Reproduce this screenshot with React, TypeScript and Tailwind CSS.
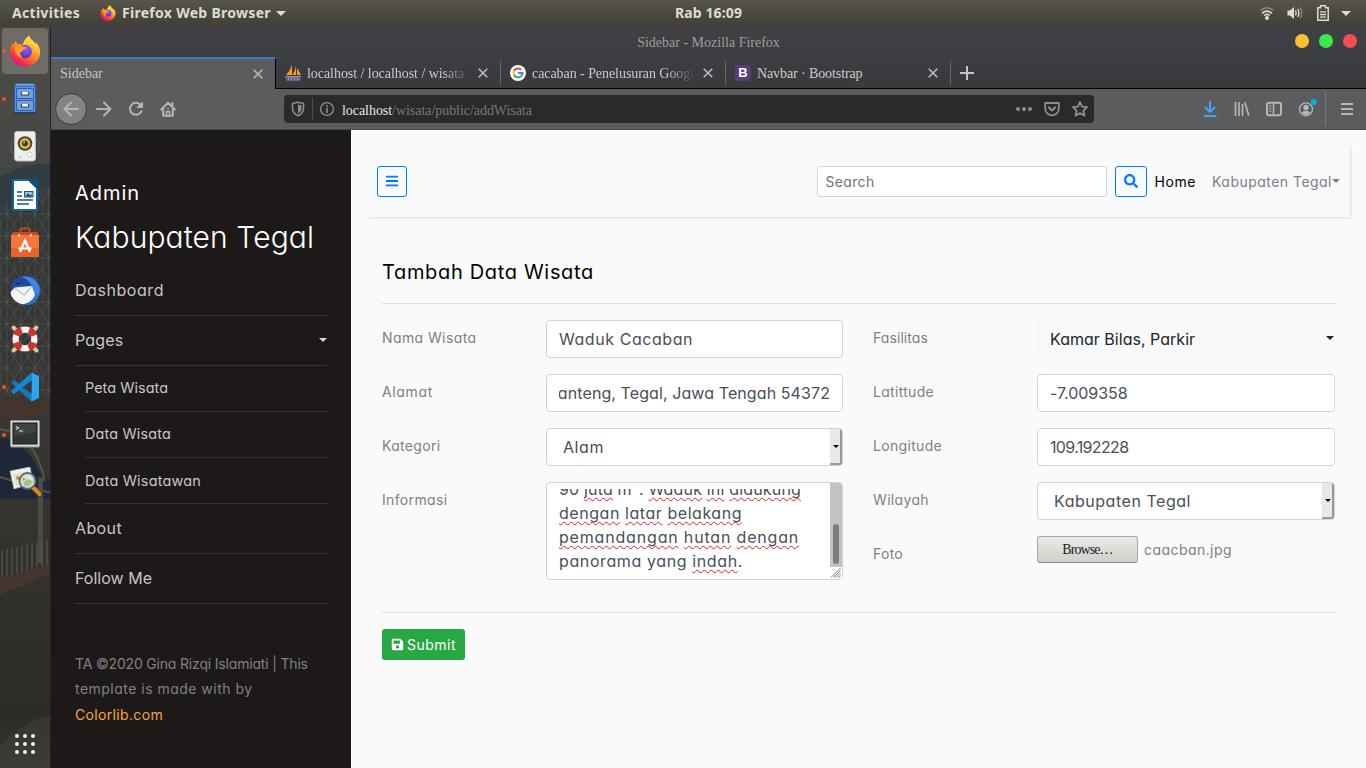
import type { ReactNode } from "react";
import { FaBars, FaSave, FaSearch } from "react-icons/fa";

/* ---------- desktop icons ---------- */

function FirefoxLogo({ className, id }: { className: string; id: string }) {
  return (
    <svg viewBox="0 0 32 32" className={className}>
      <defs>
        <linearGradient id={`${id}-body`} x1="0.85" y1="0.1" x2="0.25" y2="0.95">
          <stop offset="0" stopColor="#ffe847" />
          <stop offset="0.3" stopColor="#ffb22e" />
          <stop offset="0.6" stopColor="#ff6a2b" />
          <stop offset="0.85" stopColor="#f8294f" />
          <stop offset="1" stopColor="#e0128a" />
        </linearGradient>
        <radialGradient id={`${id}-globe`} cx="0.6" cy="0.3" r="0.8">
          <stop offset="0" stopColor="#9059ff" />
          <stop offset="0.6" stopColor="#6a3fd6" />
          <stop offset="1" stopColor="#4b2fa0" />
        </radialGradient>
      </defs>
      <path
        fill={`url(#${id}-body)`}
        d="M20.2 0.6c.5 2 1.400 3.300 3 4.700 1.500 1.400 2.800 2.400 3.600 4.200.2-.9.200-1.500 0-2.500 2.800 2.900 4.300 6.300 4.300 10.100C31.100 25.200 24.600 31.500 16.200 31.500 7.700 31.500 1 25.200 1 17c0-3.600 1-6.400 3.200-9.200 0 .8.100 1.300.4 1.900C5 8.300 5.700 7 6.900 6c.3 1.500 1 2.400 2.200 3.100 1.500-.4 3.200-.2 4.700.7 1.100-3.700 3-6.800 6.400-9.200z"
      />
      <circle cx="16.300" cy="16.600" r="6.600" fill={`url(#${id}-globe)`} />
      <path
        fill="#ff9a2d"
        d="M5.500 11.300c3-1.800 6-1.300 8.400.6 1.600-.2 3 .1 3.700.8-.4 1.400-2.600 1.700-4 2.700-.8.700-.6 1.700-2.200 1.900-.6 2.200.6 4.300 2.600 5.300-5.200.5-8.900-4.400-8.500-11.300z"
      />
      <path fill="#ffd83d" opacity="0.75" d="M20.200.6c.5 2 1.400 3.300 3 4.700 3 2.900 5 5.700 4.700 10.300-1.200-3.300-3.600-5.600-7-6.600-2.500-.8-4.600-.2-7.100.8 1.100-3.700 3-6.800 6.400-9.200z" />
    </svg>
  );
}

function FilesIcon() {
  return (
    <svg viewBox="0 0 32 32" className="size-8">
      <path d="M7 0.500h18l2 3H5z" fill="#79aee8" stroke="#2c5d9e" strokeWidth="0.800" />
      <rect x="5.500" y="3" width="21" height="26.500" fill="#5b93dc" stroke="#2c5d9e" />
      <rect x="7.500" y="5.500" width="17" height="10" fill="#6ba1e4" stroke="#2f62a6" />
      <rect x="7.500" y="17.500" width="17" height="10" fill="#6ba1e4" stroke="#2f62a6" />
      <path d="M12.500 9v3h7V9M12.500 21v3h7v-3" fill="#fff" stroke="#43464b" strokeWidth="1.200" />
      <path d="M5 30h22" stroke="#24282c" strokeWidth="1" />
    </svg>
  );
}

function SpeakerIcon() {
  return (
    <svg viewBox="0 0 32 32" className="size-8">
      <path d="M3.500 9c-2.500 4-2.500 9 0 13M28.500 9c2.500 4 2.500 9 0 13" fill="none" stroke="#41627f" strokeWidth="1.500" opacity="0.700" />
      <path d="M8 0.500h16c2 0 2.500 1 2.300 3L26.500 27c-.1 2-1 3-3 3H8.500c-2 0-2.900-1-3-3L5.700 3.500C5.500 1.500 6 .5 8 .5z" fill="#eeeeec" stroke="#bfc0bd" />
      <circle cx="16" cy="12.500" r="7.300" fill="#41413f" />
      <circle cx="16" cy="12.500" r="5.400" fill="#d9b530" />
      <circle cx="16" cy="12.500" r="2.800" fill="#34342f" />
      <circle cx="15.200" cy="11.500" r="0.900" fill="#c8c6a4" />
      <circle cx="20.500" cy="23.500" r="2.600" fill="#fff" stroke="#c9c9c6" />
      <path d="M10 26h3" stroke="#b5b5b2" />
    </svg>
  );
}

function WriterIcon() {
  return (
    <svg viewBox="0 0 32 32" className="size-8">
      <path d="M4 1h16l8 8v22H4z" fill="#fff" stroke="#15639b" strokeWidth="2" />
      <path d="M18.500 0H29v10.500z" fill="#0d4f80" />
      <path d="M8 13h5M8 17h5M8 21h16M8 25h12" stroke="#15588f" strokeWidth="1.700" />
      <rect x="15.500" y="12.500" width="8.500" height="5.500" fill="#8cc3ea" stroke="#15588f" />
      <path d="M16 17.500l3-3 2 2 1-1 2 2z" fill="#24425b" />
    </svg>
  );
}

function SoftwareIcon() {
  return (
    <svg viewBox="0 0 32 32" className="size-8">
      <path d="M11.500 6V3q0-1.500 1.500-1.500h6q1.500 0 1.500 1.500v3" fill="none" stroke="#c24418" strokeWidth="2" />
      <path d="M4 5h24l2 3H2z" fill="#cf4b1c" />
      <path d="M2 8h28v22H2z" fill="#f0783f" />
      <path d="M2 21h28v9H2z" fill="#e8622a" />
      <path d="M10 7v2.500M22 7v2.500" stroke="#fff" strokeWidth="1.200" />
      <path d="M11 25l5-11.500L21 25M9.500 21.500h13" fill="none" stroke="#fff" strokeWidth="2.200" />
    </svg>
  );
}

function ThunderbirdIcon() {
  return (
    <svg viewBox="0 0 32 32" className="size-8">
      <circle cx="17" cy="15.500" r="14.500" fill="#2458b8" />
      <path d="M9 3C17-1 28 3 30.500 13c1 8-4 15-11 17.300 5-5 7-11 5-16.300C22 6 15 3 9 3z" fill="#3f86e0" />
      <path d="M1.500 17L6 12.500l17-1.500 3 9c-2 7-9 10.500-15 8.500C5.500 26.500 2 22 1.500 17z" fill="#f4f6f8" />
      <path d="M6 13.500l9 6.500 8-8.500" fill="none" stroke="#bcc4cc" strokeWidth="1.200" />
      <path d="M2.500 13c0-6 4-10 9-11 5 .5 9 4 10 9-6-1-13-1-19 2z" fill="#1d4aa0" />
      <circle cx="9" cy="8.500" r="1.100" fill="#0b1c40" />
      <path d="M11 29c7 1 14-4 16-11l3 2c-2 6-7 10-13 10-2 0-4 0-6-1z" fill="#2f6fd0" />
    </svg>
  );
}

function HelpIcon() {
  return (
    <svg viewBox="0 0 32 32" className="size-8">
      <g stroke="#d9c79a" strokeWidth="4" strokeLinecap="round">
        <path d="M4.500 4.500l3 3M27.500 4.500l-3 3M4.500 27.500l3-3M27.500 27.500l-3-3" />
      </g>
      <circle cx="16" cy="16" r="9.500" fill="none" stroke="#f3f3f1" strokeWidth="6.500" />
      <circle cx="16" cy="16" r="9.500" fill="none" stroke="#d0322d" strokeWidth="6.500" strokeDasharray="7.460 7.460" strokeDashoffset="-3.700" />
      <circle cx="16" cy="16" r="12.900" fill="none" stroke="#8d2723" strokeWidth="0.600" />
    </svg>
  );
}

function CodeIcon() {
  return (
    <svg viewBox="0 0 32 32" className="size-8">
      <path d="M2 11.500l3-2.500L29 26l-6.500 4.500z" fill="#1279bd" />
      <path d="M2 20.500L5 23 24 8V2z" fill="#0e6cab" />
      <path d="M22.500 1.500L30 5v22l-7.500 3.500z" fill="#2ea3ee" />
      <path d="M22.500 9.500L13 16l9.500 6.500z" fill="#383b3d" />
      <path d="M22.500 1.500L2 20.500 5 23l17.500-13.500z" fill="#1b86cd" />
    </svg>
  );
}

function TerminalIcon() {
  return (
    <svg viewBox="0 0 32 32" className="size-8">
      <rect x="1.500" y="1.500" width="29" height="26.500" rx="1" fill="#d5d6d4" stroke="#909190" />
      <rect x="4" y="4" width="24" height="21" fill="#2c3633" stroke="#161b19" />
      <path d="M5 5h22v8L5 17z" fill="#3c4744" />
      <path d="M7 7.500l2.500 1.500L7 10.500M10 12h4" fill="none" stroke="#dfe4e2" strokeWidth="1.100" />
    </svg>
  );
}

function ImageViewerIcon() {
  return (
    <svg viewBox="0 0 32 32" className="size-8">
      <path d="M1 4l20-4 3 16-19 6z" fill="#f0f0ea" stroke="#b9b9b0" strokeWidth="0.700" />
      <path d="M4 7l15-3 2 11-14 4z" fill="#dfe3c8" />
      <circle cx="9" cy="11" r="2" fill="#e58a2c" />
      <path d="M24.500 21l6 6" stroke="#d98b1c" strokeWidth="4" strokeLinecap="round" />
      <circle cx="18.500" cy="14" r="8" fill="#d7e2ea" fillOpacity="0.900" stroke="#56697d" strokeWidth="1.800" />
      <path d="M14 16l4-4 6 2-3 4-5 1z" fill="#a9c07c" />
      <path d="M13.500 10l3 2-2.500 2z" fill="#dc8a3a" />
    </svg>
  );
}

function DockItem({ running, active, children }: { running?: boolean; active?: boolean; children: ReactNode }) {
  return (
    <li className="relative flex h-12 w-[51px] items-center pl-0.5">
      <span className={active ? "flex h-[46px] w-[46px] items-center justify-center rounded bg-white/20" : "flex h-[46px] w-[46px] items-center justify-center"}>
        {children}
      </span>
      {running && <span className="absolute top-[22px] left-0.5 size-1 rounded-full bg-[#e95420]" />}
    </li>
  );
}

function DockBackdrop() {
  return (
    <svg viewBox="0 0 51 741" preserveAspectRatio="none" className="absolute inset-0 h-full w-full">
      <defs>
        <linearGradient id="dock-sky" x1="0" y1="0" x2="0" y2="1">
          <stop offset="0" stopColor="#4b473e" />
          <stop offset="0.100" stopColor="#4a4a46" />
          <stop offset="0.200" stopColor="#444643" />
          <stop offset="0.240" stopColor="#333836" />
          <stop offset="0.550" stopColor="#373633" />
          <stop offset="0.750" stopColor="#33312c" />
          <stop offset="0.930" stopColor="#2b2c28" />
          <stop offset="1" stopColor="#383731" />
        </linearGradient>
        <pattern id="dock-truss" width="14" height="22" patternUnits="userSpaceOnUse">
          <path d="M0 0l14 22M14 0L0 22M0 0v22M7 0v22M0 11h14" stroke="#6a6b66" strokeWidth="0.700" fill="none" />
        </pattern>
        <pattern id="dock-rail" width="5" height="60" patternUnits="userSpaceOnUse">
          <path d="M2 0v60" stroke="#56544e" strokeWidth="1.200" />
        </pattern>
      </defs>
      <path d="M0 0h51v741H0z" fill="url(#dock-sky)" />
      <path d="M0 150q25-14 51-14v30q-28 2-51 24z" fill="#303c42" />
      <path d="M0 182q26-22 51-22v210H0z" fill="url(#dock-truss)" opacity="0.550" />
      <path d="M0 372h51v14L0 396z" fill="#4a332c" opacity="0.700" />
      <path d="M0 410q26 4 40 36l11 8v18H0z" fill="#1f2838" />
      <path d="M0 402q34 4 45 52M0 450l51 16" stroke="#57534b" strokeWidth="2" fill="none" />
      <path d="M38 450h5v86h-5z" fill="#4c4a45" />
      <path d="M0 524l51-12v26L0 556z" fill="url(#dock-rail)" />
      <path d="M0 552l51-16v10L0 568z" fill="#42362f" />
      <path d="M0 720q22-26 51-32v53H0z" fill="#403f39" opacity="0.600" />
      <path d="M50.500 0v741" stroke="#23221f" />
    </svg>
  );
}

function Dock() {
  return (
    <aside className="relative w-[51px] shrink-0 overflow-hidden">
      <DockBackdrop />
      <div className="relative flex h-full flex-col justify-between">
        <ul>
          <DockItem running active><FirefoxLogo id="dock-fx" className="size-8" /></DockItem>
          <DockItem running><FilesIcon /></DockItem>
          <DockItem><SpeakerIcon /></DockItem>
          <DockItem><WriterIcon /></DockItem>
          <DockItem><SoftwareIcon /></DockItem>
          <DockItem><ThunderbirdIcon /></DockItem>
          <DockItem><HelpIcon /></DockItem>
          <DockItem running><CodeIcon /></DockItem>
          <DockItem running><TerminalIcon /></DockItem>
          <DockItem><ImageViewerIcon /></DockItem>
        </ul>
        <svg viewBox="0 0 20 20" className="mb-3.5 ml-[15px] size-5 fill-[#f2f2f0]">
          {[2, 10, 18].map((y) => [2, 10, 18].map((x) => <circle key={`${x}-${y}`} cx={x} cy={y} r="2" />))}
        </svg>
      </div>
    </aside>
  );
}

/* ---------- system bar ---------- */

function SystemBar() {
  return (
    <header className="flex h-[27px] shrink-0 items-center bg-linear-to-b from-[#57544b] to-[#403e37] pb-px font-['Noto_Sans',sans-serif] text-sm font-bold text-[#dfdbd2]">
      <div className="flex w-[675px] items-center pl-3">
        <span className="w-[88px] tracking-[0.3px]">Activities</span>
        <FirefoxLogo id="bar-fx" className="size-4" />
        <span className="ml-1.5 tracking-[0.29px]">Firefox Web Browser</span>
        <svg viewBox="0 0 10 5" className="ml-[5px] h-[5px] w-2.5 fill-[#dfdbd2]"><path d="M0 0h10L5 5z" /></svg>
      </div>
      <span className="tracking-[0.11px]">Rab 16:09</span>
      <div className="ml-auto flex items-center pr-[15px]">
        <svg viewBox="0 0 16 14" className="h-3.5 w-4" fill="none" stroke="#dfdbd2" strokeWidth="1.600">
          <path d="M1.500 4.500Q8-1 14.500 4.500" opacity="0.400" />
          <path d="M3 7.300Q8 3 13 7.300M5.200 9.500Q8 7.200 10.800 9.500" />
          <circle cx="8" cy="12" r="1.200" fill="#dfdbd2" />
        </svg>
        <svg viewBox="0 0 16 14" className="ml-3 h-3.5 w-4" fill="none" stroke="#dfdbd2" strokeWidth="1.400">
          <path d="M.5 4.500h2.500L7 1v12L3 9.500H.5z" fill="#dfdbd2" stroke="none" />
          <path d="M8.500 4.500q1.500 2.500 0 5M10.700 3q2.500 4 0 8" />
          <path d="M13 1.500q3.500 5.500 0 11" opacity="0.400" />
        </svg>
        <svg viewBox="0 0 12 16" className="ml-3.5 h-4 w-3" fill="none" stroke="#dfdbd2" strokeWidth="1.500">
          <path d="M3.500 2.700V.8h5v1.900h2.700v12.500H.8V2.700z" />
          <path d="M3 6.900h6M3 9.500h6M3 12.200h6" strokeWidth="1.300" />
        </svg>
        <svg viewBox="0 0 10 5" className="ml-3 h-[5px] w-2.5 fill-[#dfdbd2]"><path d="M0 0h10L5 5z" /></svg>
      </div>
    </header>
  );
}

/* ---------- browser frame ---------- */

function CloseGlyph() {
  return (
    <svg viewBox="0 0 10 10" className="size-2.5 shrink-0" stroke="#b9b9ba" strokeWidth="1.600">
      <path d="M.7.7l8.600 8.600M9.300.7L.7 9.300" />
    </svg>
  );
}

function Tab({ icon, fade, children }: { icon: ReactNode; fade?: boolean; children: ReactNode }) {
  return (
    <div className="flex h-[31px] w-[225px] items-center pl-[9px]">
      {icon}
      <span className={fade
        ? "ml-1.5 w-[165px] overflow-hidden pt-0.5 whitespace-nowrap mask-r-from-82% mask-r-to-99%"
        : "ml-1.5 w-[165px] overflow-hidden pt-0.5 whitespace-nowrap"}>{children}</span>
      <span className="ml-1.5 flex"><CloseGlyph /></span>
      <span className="ml-auto h-6 w-px bg-[#66676a]" />
    </div>
  );
}

function TabStrip() {
  return (
    <div className="flex h-8 items-stretch text-sm text-[#c9cacb]">
      <div className="flex w-[225px] items-center border-t-2 border-r border-r-black border-t-[#3f79c8] bg-[#5b5c5e] pr-3 pl-[9px] text-[#c3c4c5]">
        <span>Sidebar</span>
        <span className="ml-auto"><CloseGlyph /></span>
      </div>
      <div className="flex flex-1 items-center border-b border-black">
        <Tab
          fade
          icon={
            <svg viewBox="0 0 16 16" className="size-4">
              <path d="M7 0v10H1q4-4 6-10zM11 1v9H7.500Q10 6 11 1zM12 3q2 3 4 7h-4z" fill="#f39a1f" />
              <path d="M0 11h16l-1.500 4.500h-13z" fill="#8d8fb3" />
              <path d="M2 12v3M5 12v3M8 12v3M11 12v3M14 12v2" stroke="#2f3050" strokeWidth="0.900" />
            </svg>
          }
        >
          <span className="tracking-[-0.05px]">localhost / localhost / wisata /</span>
        </Tab>
        <Tab
          fade
          icon={
            <svg viewBox="0 0 16 16" className="size-4">
              <circle cx="8" cy="8" r="8" fill="#fff" />
              <g fill="none" strokeWidth="2">
                <path d="M11.200 4.900A4.400 4.400 0 0 0 4.100 6" stroke="#ea4335" />
                <path d="M4.100 6a4.400 4.400 0 0 0 0 4" stroke="#fbbc05" />
                <path d="M4.100 10a4.400 4.400 0 0 0 6.900 1.300" stroke="#34a853" />
                <path d="M11 11.300A4.400 4.400 0 0 0 12.400 8H8" stroke="#4285f4" />
              </g>
            </svg>
          }
        >
          <span className="tracking-[-0.06px]">cacaban - Penelusuran Googl</span>
        </Tab>
        <Tab
          icon={
            <span className="flex size-4 items-center justify-center rounded-[3px] bg-[#563d7c] font-['Liberation_Sans',sans-serif] text-[13px] leading-none font-bold text-white">B</span>
          }
        >
          <span className="tracking-[-0.1px]">Navbar · Bootstrap</span>
        </Tab>
        <svg viewBox="0 0 14 14" className="ml-[9px] size-3.5" stroke="#c3c4c5" strokeWidth="2"><path d="M7 0v14M0 7h14" /></svg>
      </div>
    </div>
  );
}

function Tool({ className, children }: { className?: string; children: ReactNode }) {
  return (
    <span className={className ?? "flex w-8 justify-center"}>
      <svg viewBox="0 0 16 16" className="size-4 overflow-visible" fill="none" stroke="#b4b5b6" strokeWidth="2" strokeLinecap="round" strokeLinejoin="round">
        {children}
      </svg>
    </span>
  );
}

function Toolbar() {
  return (
    <div className="flex h-[41px] items-center border-b border-[#474849] bg-[#5b5c5e] pl-1 text-sm">
      <Tool className="mr-px flex size-8 items-center justify-center rounded-full border border-[#3b3b3d] bg-[#828384]">
        <path d="M15 8H1.500M8 1.500L1.500 8 8 14.500" />
      </Tool>
      <Tool><path d="M1 8h13.500M8 1.500L14.500 8 8 14.500" /></Tool>
      <Tool>
        <path d="M13.500 10.200A6 6 0 1 1 12.600 4" />
        <path d="M14.500 1.500v5h-5z" fill="#b4b5b6" strokeWidth="1" />
      </Tool>
      <Tool>
        <path d="M1.200 8.500L8 1.700l6.800 6.800M3.200 8.500v6.300h9.600V8.500" />
        <path d="M6.500 14.500v-4h3v4M7.800 7.500h.4" strokeWidth="1.500" />
        <path d="M12.300 2v3" />
      </Tool>
      <div className="ml-[100px] flex h-7 w-[810px] items-center rounded-sm bg-[#2a2a2b] text-[#77787a]">
        <Tool className="flex w-7 justify-center">
          <path stroke="#8b8c8d" strokeWidth="1.600" d="M2.500 2.500L8 1.200l5.500 1.300v4.700c0 3.500-2.200 6-5.500 7.500C4.700 13.200 2.500 10.700 2.500 7.200z" />
          <path fill="#8b8c8d" stroke="none" d="M8 3.500l3.500.8v3c0 2.200-1.300 4-3.500 5.100z" />
        </Tool>
        <span className="h-[22px] w-px bg-[#4d4e4f]" />
        <Tool className="flex w-7 justify-center">
          <g stroke="#8b8c8d" strokeWidth="1.400"><circle cx="8" cy="8" r="6.400" /><path d="M8 7.500v3.700M8 4.700v.4" strokeWidth="1.700" /></g>
        </Tool>
        <span className="ml-px pt-[3px] tracking-[-0.05px]"><span className="text-[#e4e4e5]">localhost</span>/wisata/public/addWisata</span>
        <Tool className="ml-auto flex w-7 justify-center">
          <g fill="#8e8f90" stroke="none"><circle cx="2" cy="8" r="2" /><circle cx="8" cy="8" r="2" /><circle cx="14" cy="8" r="2" /></g>
        </Tool>
        <Tool className="flex w-7 justify-center">
          <g stroke="#8e8f90"><path d="M1.200 2h13.600v5.500a6.800 6.800 0 0 1-13.600 0z" strokeWidth="1.800" /><path d="M4.700 6.300L8 9.500l3.300-3.200" /></g>
        </Tool>
        <Tool className="flex w-7 justify-center">
          <path stroke="#8e8f90" strokeWidth="1.800" d="M8 1l2.100 4.600 5 .6-3.700 3.400 1 5L8 12.100l-4.400 2.500 1-5L.9 6.200l5-.6z" />
        </Tool>
      </div>
      <div className="ml-[100px] flex items-center">
        <Tool><path stroke="#45a1ff" d="M8 .8v10M3.500 6.500L8 11l4.500-4.500M2.500 15h11" /></Tool>
        <Tool><path strokeLinecap="butt" d="M1.500 1v14M5 1v14M8.500 3v12M10.800 1.300l4 13.500" strokeWidth="1.700" /></Tool>
        <Tool>
          <rect x="1" y="1.800" width="14" height="12.400" rx="2" />
          <path d="M7.500 2v12" strokeWidth="1.500" />
          <path d="M3.500 5h1.700M3.500 7.500h1.700M3.500 10h1.700" strokeWidth="1" />
        </Tool>
        <Tool>
          <circle cx="8" cy="8.300" r="6.500" strokeWidth="1.300" />
          <circle cx="8" cy="6.500" r="2.700" fill="#b4b5b6" stroke="none" />
          <path d="M3.600 11.800Q5 9.800 8 9.800t4.400 2Q10.500 14 8 14t-4.400-2.200z" fill="#b4b5b6" stroke="none" />
          <circle cx="15.700" cy="1" r="3" fill="#00b3f4" stroke="none" />
        </Tool>
        <span className="ml-[3px] h-[34px] w-px bg-[#77787a]" />
        <Tool className="ml-[5px] flex w-8 justify-center"><path strokeLinecap="butt" d="M2 3h12M2 8h12M2 13h12" /></Tool>
      </div>
    </div>
  );
}

function BrowserFrame() {
  return (
    <div className="shrink-0 bg-linear-to-b from-[#404145] to-[#343538] font-['Liberation_Serif',serif]">
      <div className="grid h-[30px] grid-cols-[1fr_auto_1fr] items-center text-sm text-[#9c9d9e]">
        <span />
        <span className="pt-0.5">Sidebar - Mozilla Firefox</span>
        <span className="flex justify-end gap-2.5 pr-[9px] pb-0.5">
          <span className="size-3.5 rounded-full bg-[#fdc035]" />
          <span className="size-3.5 rounded-full bg-[#3bea49]" />
          <span className="size-3.5 rounded-full bg-[#f84d55]" />
        </span>
      </div>
      <TabStrip />
      <Toolbar />
    </div>
  );
}

/* ---------- page: navigation ---------- */

function Caret({ className }: { className: string }) {
  return <svg viewBox="0 0 8 4" className={className}><path d="M0 0h8L4 4z" /></svg>;
}

function SideLink({ className, children }: { className: string; children: ReactNode }) {
  return (
    <li>
      <a className={`flex h-[50px] items-center justify-between border-b border-[#383534] pb-0.5 ${className}`}>{children}</a>
    </li>
  );
}

function SubLink({ className, children }: { className: string; children: ReactNode }) {
  return (
    <li>
      <a className={`ml-2.5 flex h-[46px] items-center border-b border-[#383534] text-[14.4px] ${className}`}>{children}</a>
    </li>
  );
}

function Sidebar() {
  return (
    <nav className="w-[300px] shrink-0 bg-[#1d1919] px-6 pt-12 text-[#c6c5c5]">
      <h5 className="text-xl leading-[30px] tracking-[0.95px] text-white">Admin</h5>
      <h1 className="mt-2 text-[30px] leading-[42px] font-light tracking-[0.1px] whitespace-nowrap text-white">Kabupaten Tegal</h1>
      <ul className="mt-2">
        <SideLink className="tracking-[0.56px]">Dashboard</SideLink>
        <SideLink className="tracking-[0.2px]">Pages<Caret className="h-1 w-2 fill-[#d8d6d6]" /></SideLink>
        <SubLink className="pb-0.5 tracking-[0.06px]">Peta Wisata</SubLink>
        <SubLink className="pb-0.5 tracking-[0.17px]">Data Wisata</SubLink>
        <SubLink className="tracking-[0.22px]">Data Wisatawan</SubLink>
        <SideLink className="tracking-[0.38px]">About</SideLink>
        <SideLink className="tracking-[0.02px]">Follow Me</SideLink>
      </ul>
      <p className="mt-[47px] text-sm leading-[25.4px] whitespace-nowrap text-[#828080]">
        <span className="tracking-[-0.18px]">TA ©2020 Gina Rizqi Islamiati | This</span><br />
        <span className="tracking-[0.48px]">template is made with by</span><br />
        <a className="tracking-[0.34px] text-[#f5a937]">Colorlib.com</a>
      </p>
    </nav>
  );
}

function Navbar() {
  return (
    <div className="flex h-[72px] items-center rounded-xs bg-[#f8f9fb] px-2.5 text-sm shadow-[1px_1px_3px_rgba(0,0,0,0.12)]">
      <button className="flex h-[31px] w-[30px] items-center justify-center rounded-[3px] border border-[#007bff] text-[#007bff]"><FaBars className="size-3.5" /></button>
      <div className="ml-auto flex h-[31px] w-[290px] items-center rounded-[3px] border border-[#ced4da] bg-white px-2 pt-0.5 tracking-[0.33px] text-[#6c757d]">Search</div>
      <button className="ml-2 flex h-[31px] w-8 items-center justify-center rounded-[3px] border border-[#007bff] text-[#007bff]"><FaSearch className="size-3.5" /></button>
      <a className="ml-2 pt-px tracking-[0.57px] text-black">Home</a>
      <a className="ml-4 pt-px tracking-[0.47px] text-[#7f7f80]">Kabupaten Tegal</a>
      <Caret className="h-1 w-2 fill-[#7f7f80]" />
    </div>
  );
}

/* ---------- page: form ---------- */

function Row({ label, tracking, children }: { label: string; tracking: string; children: ReactNode }) {
  return (
    <div className="mb-4 flex items-start">
      <label className={`w-[164px] shrink-0 pt-[7px] text-sm leading-[22px] text-[#808081] ${tracking}`}>{label}</label>
      {children}
    </div>
  );
}

function Field({ tracking, children }: { tracking: string; children: ReactNode }) {
  return (
    <div className={`flex h-[38px] min-w-0 flex-1 items-center rounded border border-[#ced4da] bg-white px-3 whitespace-nowrap ${tracking}`}>{children}</div>
  );
}

function SelectField({ tracking, children }: { tracking: string; children: ReactNode }) {
  return (
    <div className="flex h-[38px] flex-1 items-center justify-between overflow-hidden rounded border border-[#ced4da] bg-white pl-4">
      <span className={tracking}>{children}</span>
      <span className="flex h-full w-3 items-center justify-center border-r-2 border-b-2 border-[#98999b] bg-[#e8e8e7]">
        <Caret className="ml-0.5 h-[3px] w-1.5 fill-black" />
      </span>
    </div>
  );
}

function Misspelt({ children }: { children: ReactNode }) {
  return <span className="underline decoration-[#f01c20] decoration-wavy decoration-1 underline-offset-[2px] [text-decoration-skip-ink:none]">{children}</span>;
}

function InfoArea() {
  return (
    <div className="flex h-[98px] flex-1 overflow-hidden rounded border border-[#ced4da] bg-white">
      <div className="mt-1.5 flex h-[86px] flex-1 flex-col justify-end overflow-hidden pb-0.5 pl-3 leading-6 whitespace-nowrap">
        <p className="tracking-[0.17px]">90 <Misspelt>juta</Misspelt> m². <Misspelt>Waduk</Misspelt> <Misspelt>ini</Misspelt> <Misspelt>didukung</Misspelt></p>
        <p className="tracking-[0.55px]"><Misspelt>dengan</Misspelt> <Misspelt>latar</Misspelt> <Misspelt>belakang</Misspelt></p>
        <p className="tracking-[0.82px]"><Misspelt>pemandangan</Misspelt> <Misspelt>hutan</Misspelt> <Misspelt>dengan</Misspelt></p>
        <p className="tracking-[0.61px]">panorama yang <Misspelt>indah</Misspelt>.</p>
      </div>
      <div className="flex w-3 flex-col justify-between">
        <div className="flex h-[84px] flex-col items-center justify-end bg-[#c2c4c4] pb-[3px]">
          <span className="h-10 w-1.5 rounded-full bg-[#7a7f80]" />
        </div>
        <svg viewBox="0 0 12 12" className="size-3" stroke="#6d6e70" strokeWidth="0.900"><path d="M1 10.500L10.500 1M3.500 10.500L10.500 3.500M6 10.500L10.500 6M8.500 10.500l2-2" /></svg>
      </div>
    </div>
  );
}

function WisataForm() {
  return (
    <section className="mx-[15px] mt-10">
      <h5 className="text-xl leading-[30px] tracking-[0.67px] text-black">Tambah Data Wisata</h5>
      <hr className="mt-4 mb-4 border-[#dfdfdf]" />
      <div className="flex gap-[30px] text-base text-[#495057]">
        <div className="w-[461px]">
          <Row label="Nama Wisata" tracking="tracking-[0.4px]"><Field tracking="tracking-[0.56px]">Waduk Cacaban</Field></Row>
          <Row label="Alamat" tracking="tracking-[0.66px]">
            <Field tracking="tracking-[0.09px]"><span className="flex min-w-0 flex-1 justify-end overflow-hidden">anteng, Tegal, Jawa Tengah 54372</span></Field>
          </Row>
          <Row label="Kategori" tracking="tracking-[0.33px]"><SelectField tracking="tracking-[0.57px]">Alam</SelectField></Row>
          <Row label="Informasi" tracking="tracking-[0.35px]"><InfoArea /></Row>
        </div>
        <div className="w-[462px]">
          <Row label="Fasilitas" tracking="tracking-[0.08px]">
            <div className="flex h-[38px] flex-1 items-center justify-between rounded bg-[#f8f9fa] pl-[13px] text-[#212529]">
              <span className="tracking-[0.02px]">Kamar Bilas, Parkir</span>
              <Caret className="mr-px mb-0.5 h-1 w-2 fill-[#212529]" />
            </div>
          </Row>
          <Row label="Latittude" tracking="tracking-[0.3px]"><Field tracking="tracking-[-0.04px]">-7.009358</Field></Row>
          <Row label="Longitude" tracking="tracking-[0.32px]"><Field tracking="tracking-[-0.65px]">109.192228</Field></Row>
          <Row label="Wilayah" tracking="tracking-[0.34px]"><SelectField tracking="tracking-[0.53px]">Kabupaten Tegal</SelectField></Row>
          <Row label="Foto" tracking="tracking-[0.26px]">
            <button className="flex h-[27px] w-[101px] items-center justify-center rounded-[3px] border border-[#a9a9a7] border-b-[#8b8b89] bg-linear-to-b from-[#e9e9e7] to-[#cfcfcc] font-['Liberation_Serif',serif] text-sm tracking-[-0.9px] text-[#1c1f22]">Browse…</button>
            <span className="ml-1.5 text-sm leading-[27px] tracking-[0.44px] text-[#808081]">caacban.jpg</span>
          </Row>
        </div>
      </div>
      <hr className="mt-4 mb-4 border-[#dfdfdf]" />
      <button className="flex h-[31px] w-[83px] items-center gap-[3px] rounded-[3px] bg-[#28a745] pl-[9px] text-sm tracking-[0.49px] text-white">
        <FaSave className="size-[13px]" />Submit
      </button>
    </section>
  );
}

export default function App() {
  return (
    <div className="flex h-[768px] w-[1366px] flex-col overflow-hidden">
      <SystemBar />
      <div className="flex min-h-0 flex-1">
        <Dock />
        <div className="flex min-w-0 flex-1 flex-col">
          <BrowserFrame />
          <div className="flex min-h-0 flex-1 font-[Inter,sans-serif] [font-feature-settings:'cv11']">
            <Sidebar />
            <main className="min-w-0 flex-1 bg-[#fafafa] pt-[15px] pr-4 pl-4">
              <Navbar />
              <WisataForm />
            </main>
          </div>
        </div>
      </div>
    </div>
  );
}
